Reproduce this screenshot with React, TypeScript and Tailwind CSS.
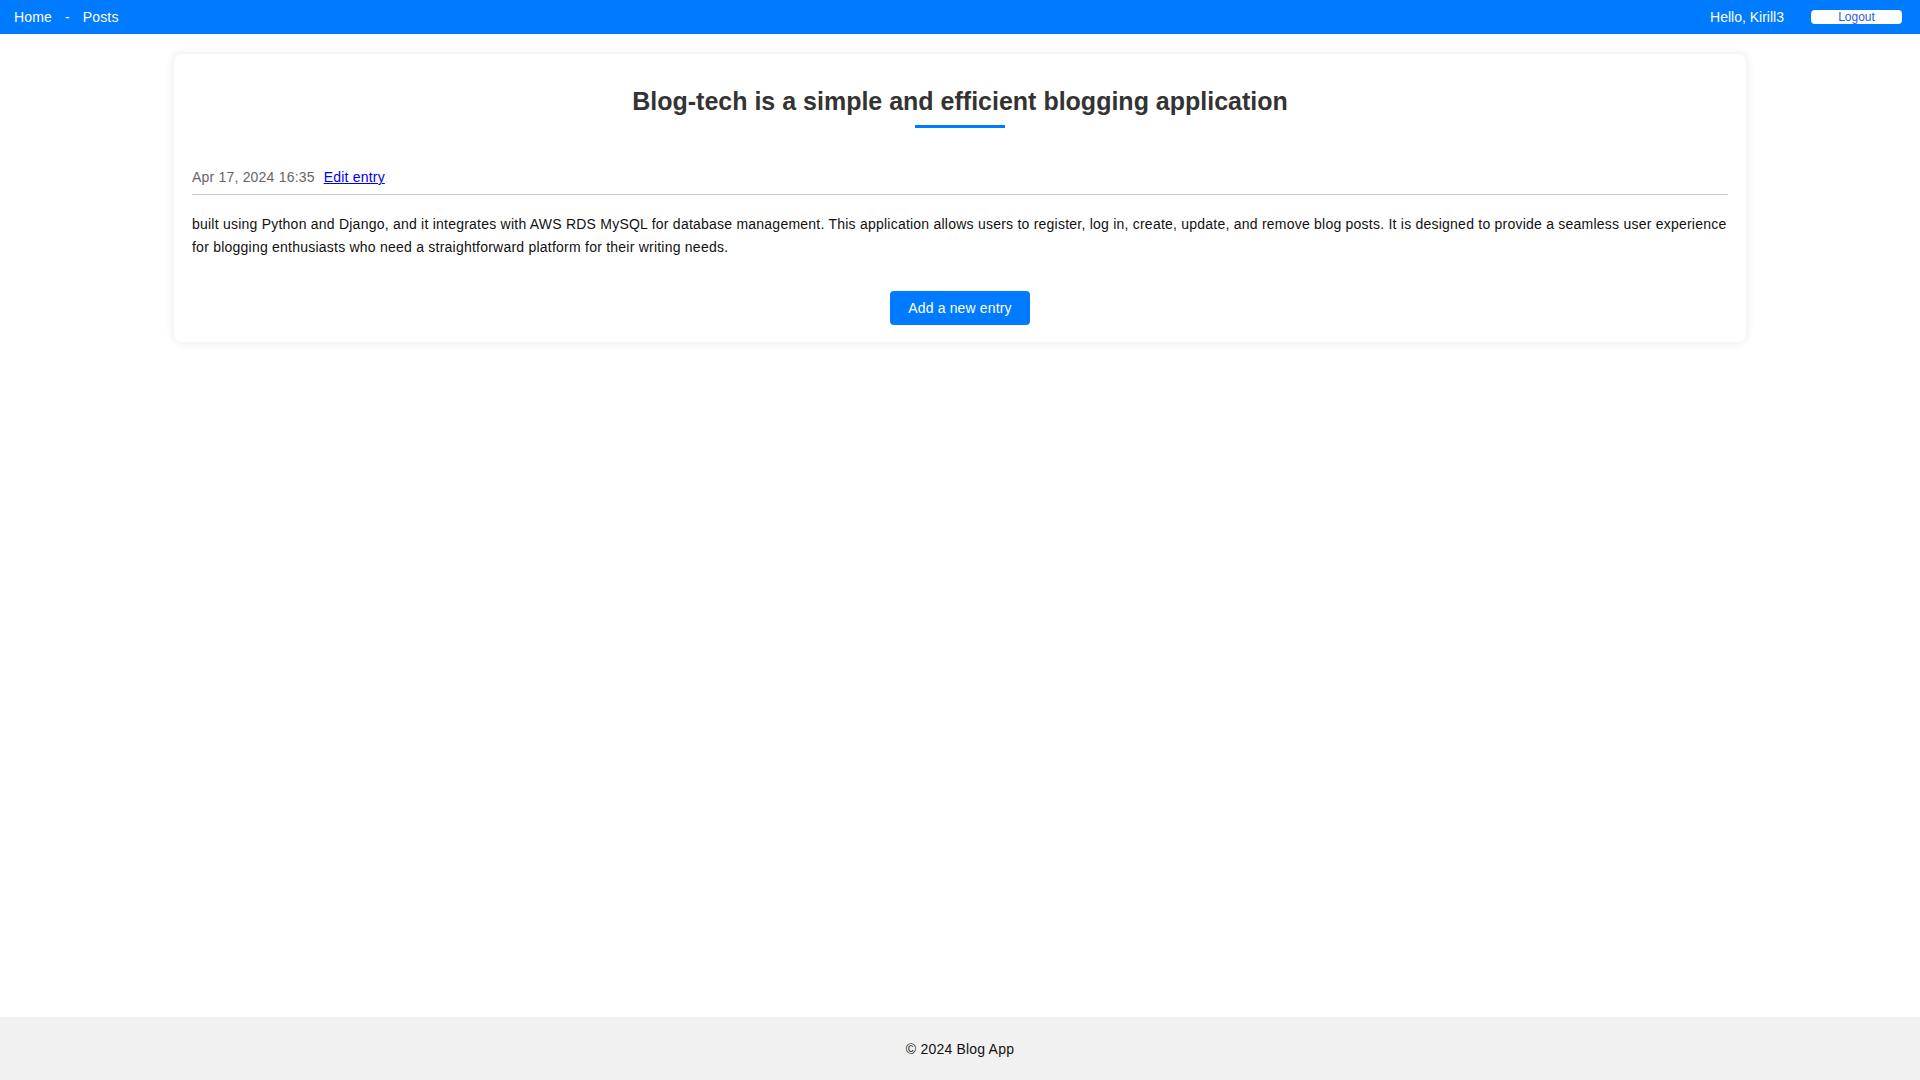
export default function App() {
  return (
    <div className="min-h-screen flex flex-col bg-white font-['Liberation_Sans',Arial,sans-serif]">
      <header className="h-[34px] bg-[#007bff] flex items-center justify-between pl-[14px] pr-[18px] text-white text-[14px]">
        <nav className="flex items-center tracking-[0.15px]">
          <a href="#" className="text-white">Home</a>
          <span className="mx-[13px]">-</span>
          <a href="#" className="text-white">Posts</a>
        </nav>
        <div className="flex items-center gap-[27px]">
          <span>Hello, Kirill3</span>
          <button
            type="button"
            className="w-[91px] h-[14px] bg-white rounded-[4px] text-[12px] leading-[14px] text-[#2f5bea]"
          >
            Logout
          </button>
        </div>
      </header>

      <main className="flex-1 pt-[20px]">
        <div className="mx-[174px] bg-white rounded-[8px] shadow-[0_0_10px_rgba(0,0,0,0.1)] px-[18px] pt-[32px] pb-[17px]">
          <h1 className="text-center text-[25px] leading-[30px] font-bold text-[#333]">
            Blog-tech is a simple and efficient blogging application
          </h1>
          <div className="mx-auto mt-[9px] w-[90px] h-[3px] bg-[#007bff]" />

          <div className="mt-[41px] flex items-center text-[14px] leading-[16px] tracking-[0.2px]">
            <span className="text-[#666]">Apr 17, 2024 16:35</span>
            <a href="#" className="ml-[9px] text-[#0000ee] underline">Edit entry</a>
          </div>
          <hr className="mt-[9px] border-0 h-px bg-[#ccc]" />

          <p className="mt-[18px] text-[14px] leading-[23px] tracking-[0.23px] text-[#111]">
            built using Python and Django, and it integrates with AWS RDS MySQL for database management. This application allows users to register, log in, create, update, and remove blog posts. It is designed to provide a seamless user experience for blogging enthusiasts who need a straightforward platform for their writing needs.
          </p>

          <div className="mt-[32px] flex justify-center">
            <button
              type="button"
              className="w-[140px] h-[34px] bg-[#007bff] text-white text-[14px] tracking-[0.15px] rounded-[4px]"
            >
              Add a new entry
            </button>
          </div>
        </div>
      </main>

      <footer className="h-[63px] bg-[#f1f1f1] flex items-center justify-center pt-px text-[14px] tracking-[0.2px] text-[#111]">
        © 2024 Blog App
      </footer>
    </div>
  )
}
